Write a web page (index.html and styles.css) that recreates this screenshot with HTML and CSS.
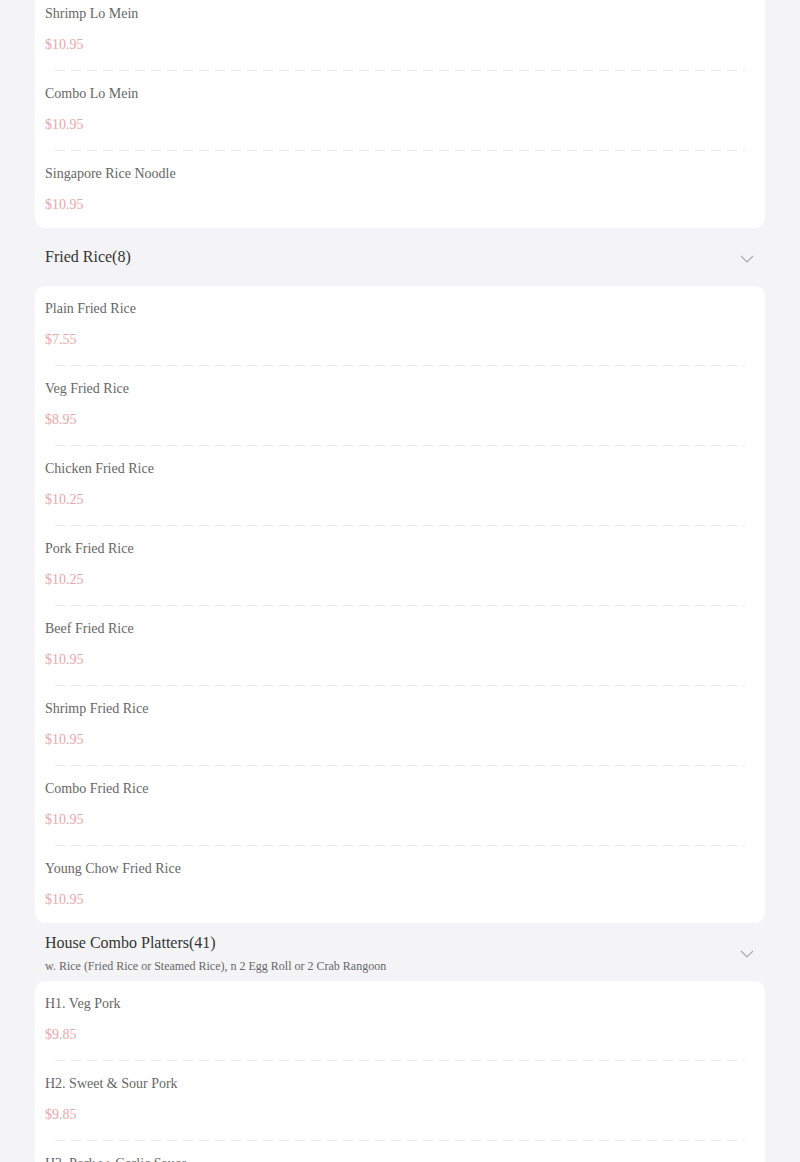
FILE: index.html
```html
<!DOCTYPE html>
<html lang="en">
<head>
<meta charset="utf-8">
<title>Menu</title>
<link rel="stylesheet" href="styles.css">
</head>
<body>
<main class="menu">
  <section class="card card-cut">
    <div class="item"><div class="name">Shrimp Lo Mein</div><div class="price">$10.95</div></div>
    <div class="item"><div class="name">Combo Lo Mein</div><div class="price">$10.95</div></div>
    <div class="item"><div class="name">Singapore Rice Noodle</div><div class="price">$10.95</div></div>
  </section>

  <header class="cat">
    <div class="cat-text"><div class="cat-title">Fried Rice(8)</div></div>
    <svg class="chev" width="14" height="8" viewBox="0 0 14 8"><polyline points="1,1 7,7 13,1" fill="none" stroke="#a8a8a8" stroke-width="1.1"/></svg>
  </header>
  <section class="card">
    <div class="item"><div class="name">Plain Fried Rice</div><div class="price">$7.55</div></div>
    <div class="item"><div class="name">Veg Fried Rice</div><div class="price">$8.95</div></div>
    <div class="item"><div class="name">Chicken Fried Rice</div><div class="price">$10.25</div></div>
    <div class="item"><div class="name">Pork Fried Rice</div><div class="price">$10.25</div></div>
    <div class="item"><div class="name">Beef Fried Rice</div><div class="price">$10.95</div></div>
    <div class="item"><div class="name">Shrimp Fried Rice</div><div class="price">$10.95</div></div>
    <div class="item"><div class="name">Combo Fried Rice</div><div class="price">$10.95</div></div>
    <div class="item"><div class="name">Young Chow Fried Rice</div><div class="price">$10.95</div></div>
  </section>

  <header class="cat cat-sub">
    <div class="cat-text">
      <div class="cat-title">House Combo Platters(41)</div>
      <div class="cat-desc">w. Rice (Fried Rice or Steamed Rice), n 2 Egg Roll or 2 Crab Rangoon</div>
    </div>
    <svg class="chev" width="14" height="8" viewBox="0 0 14 8"><polyline points="1,1 7,7 13,1" fill="none" stroke="#a8a8a8" stroke-width="1.1"/></svg>
  </header>
  <section class="card">
    <div class="item"><div class="name">H1. Veg Pork</div><div class="price">$9.85</div></div>
    <div class="item"><div class="name">H2. Sweet &amp; Sour Pork</div><div class="price">$9.85</div></div>
    <div class="item"><div class="name">H3. Pork w. Garlic Sauce</div><div class="price">$9.85</div></div>
  </section>
</main>
</body>
</html>
```
FILE: styles.css
```css
html, body {
  margin: 0;
  padding: 0;
  background: #f4f4f6;
  font-family: "Liberation Serif", "Times New Roman", serif;
}

body {
  height: 1162px;
  overflow: hidden;
}

.menu {
  margin: -9px 35px 0;
  display: flex;
  flex-direction: column;
}

.card {
  background: #ffffff;
  border-radius: 10px;
}

.card-cut {
  border-top-left-radius: 0;
  border-top-right-radius: 0;
}

.item {
  padding: 13px 10px 13px;
}

.item:not(:last-child) {
  padding-bottom: 17px;
}

.item:not(:last-child)::after {
  content: "";
  display: block;
  height: 1px;
  margin: 15px 10px -17px;
  background-image: repeating-linear-gradient(90deg, #e8e8e8 0 10px, transparent 10px 16px);
}

.name {
  font-size: 14px;
  line-height: 20px;
  color: #666666;
}

.price {
  margin-top: 11px;
  font-size: 14px;
  line-height: 20px;
  color: #eaa6a8;
}

.cat {
  display: flex;
  align-items: center;
  justify-content: space-between;
  height: 58px;
  padding: 0 11px 0 10px;
}

.cat-sub {
  align-items: stretch;
}

.cat-sub .cat-text {
  padding-top: 10px;
}

.cat-sub .chev {
  align-self: center;
}

.cat-title {
  font-size: 16px;
  line-height: 20px;
  color: #333333;
}

.cat-desc {
  margin-top: 5px;
  font-size: 12px;
  line-height: 17px;
  color: #666666;
}

.chev {
  display: block;
  flex: none;
  margin-top: 4px;
}
```
